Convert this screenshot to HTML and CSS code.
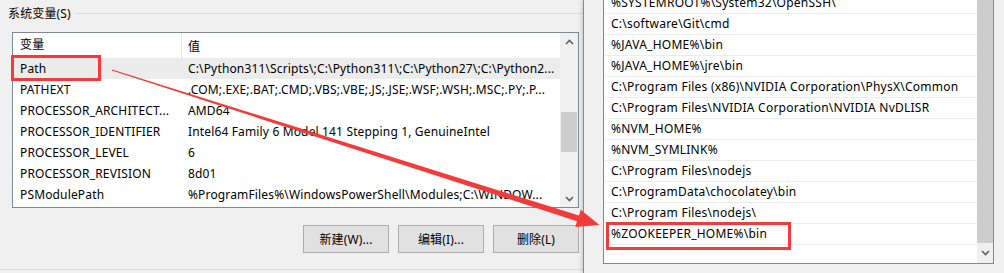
FILE: index.html
```html
<!DOCTYPE html>
<html lang="zh-CN">
<head>
<meta charset="utf-8">
<title>系统变量</title>
<link rel="stylesheet" href="styles.css">
</head>
<body>
<div class="screen">
  <section class="sys">
    <div class="group-head"><span class="group-label">系统变量(S)</span><span class="group-rule"></span></div>
    <div class="listview">
      <div class="lv-body">
        <div class="lv-header"><div class="c1">变量</div><div class="c2 hdr">值</div></div>
        <div class="lv-row selected"><div class="c1">Path</div><div class="c2">C:\Python311\Scripts\;C:\Python311\;C:\Python27\;C:\Python2...</div></div>
        <div class="lv-row"><div class="c1">PATHEXT</div><div class="c2">.COM;.EXE;.BAT;.CMD;.VBS;.VBE;.JS;.JSE;.WSF;.WSH;.MSC;.PY;.P...</div></div>
        <div class="lv-row"><div class="c1">PROCESSOR_ARCHITECT...</div><div class="c2">AMD64</div></div>
        <div class="lv-row"><div class="c1">PROCESSOR_IDENTIFIER</div><div class="c2">Intel64 Family 6 Model 141 Stepping 1, GenuineIntel</div></div>
        <div class="lv-row"><div class="c1">PROCESSOR_LEVEL</div><div class="c2">6</div></div>
        <div class="lv-row"><div class="c1">PROCESSOR_REVISION</div><div class="c2">8d01</div></div>
        <div class="lv-row"><div class="c1">PSModulePath</div><div class="c2">%ProgramFiles%\WindowsPowerShell\Modules;C:\WINDOW...</div></div>
      </div>
      <div class="vscroll">
        <div class="sb-arrow"><svg width="9" height="6" viewBox="0 0 9 6"><path d="M1 5 L4.5 1.5 L8 5" fill="none" stroke="#606060" stroke-width="1.6"/></svg></div>
        <div class="sb-track"><div class="sb-thumb"></div></div>
        <div class="sb-arrow"><svg width="9" height="6" viewBox="0 0 9 6"><path d="M1 1 L4.5 4.5 L8 1" fill="none" stroke="#606060" stroke-width="1.6"/></svg></div>
      </div>
    </div>
    <div class="buttons">
      <button class="btn">新建(W)...</button>
      <button class="btn">编辑(I)...</button>
      <button class="btn">删除(L)</button>
    </div>
    <div class="bottom-rule"></div>
  </section>
  <section class="edit">
    <div class="pathlist">
      <div class="prows">
        <div class="prow">%SYSTEMROOT%\System32\OpenSSH\</div>
        <div class="prow">C:\software\Git\cmd</div>
        <div class="prow">%JAVA_HOME%\bin</div>
        <div class="prow">%JAVA_HOME%\jre\bin</div>
        <div class="prow">C:\Program Files (x86)\NVIDIA Corporation\PhysX\Common</div>
        <div class="prow">C:\Program Files\NVIDIA Corporation\NVIDIA NvDLISR</div>
        <div class="prow">%NVM_HOME%</div>
        <div class="prow">%NVM_SYMLINK%</div>
        <div class="prow">C:\Program Files\nodejs</div>
        <div class="prow">C:\ProgramData\chocolatey\bin</div>
        <div class="prow">C:\Program Files\nodejs\</div>
        <div class="prow">%ZOOKEEPER_HOME%\bin</div>
      </div>
      <div class="pscroll">
        <div class="p-thumb"></div>
        <div class="sb-arrow down"><svg width="9" height="6" viewBox="0 0 9 6"><path d="M1 1 L4.5 4.5 L8 1" fill="none" stroke="#606060" stroke-width="1.6"/></svg></div>
      </div>
    </div>
  </section>
  <svg class="annot" width="1004" height="273" viewBox="0 0 1004 273">
    <rect x="12.5" y="56.5" width="87" height="23" fill="none" stroke="#f23c3c" stroke-width="3"/>
    <rect x="607.5" y="223.5" width="182" height="25" fill="none" stroke="#f23c3c" stroke-width="3"/>
    <path d="M112.2 69.4 L579 215.6 L580.7 209.7 L599.5 225 L575.3 226.9 L577 221.2 L111.8 70.6 Z" fill="#f23c3c"/>
  </svg>
</div>
</body>
</html>
```

FILE: styles.css
```css
* { box-sizing: border-box; }
html, body { margin: 0; padding: 0; }
body {
  background: #f0f0f0;
  font-family: "Noto Sans", "Noto Sans CJK SC", sans-serif;
  font-size: 12px;
  letter-spacing: 0.15px;
  color: #000;
}
.screen {
  position: relative;
  width: 1004px;
  height: 273px;
  display: flex;
  overflow: hidden;
}
.sys {
  width: 583px;
  display: flex;
  flex-direction: column;
}
.group-head {
  height: 27px;
  display: flex;
  align-items: center;
  padding-left: 8px;
}
.group-label { white-space: nowrap; line-height: 16px; }
.group-rule {
  flex: 1;
  height: 1px;
  background: #dcdcdc;
  margin-left: 5px;
  margin-top: -1px;
}
.listview {
  margin-top: 5px;
  margin-left: 12px;
  width: 567px;
  height: 176px;
  border: 1px solid #828790;
  background: #fff;
  display: flex;
}
.lv-body { width: 547px; overflow: hidden; }
.lv-header, .lv-row {
  display: flex;
  white-space: nowrap;
}
.lv-header { height: 25px; align-items: center; }
.lv-row { height: 21px; align-items: center; }
.lv-row.selected { background: #ececec; }
.c1 { width: 169px; padding-left: 7px; overflow: hidden; }
.c2 { flex: 1; padding-left: 6px; overflow: hidden; }
.lv-header .c1 { height: 25px; line-height: 24px; border-right: 1px solid #e5e5e5; }
.vscroll {
  width: 18px;
  background: #f0f0f0;
  display: flex;
  flex-direction: column;
}
.sb-arrow {
  height: 17px;
  display: flex;
  align-items: center;
  justify-content: center;
}
.sb-track { flex: 1; padding: 62px 1px 0 1px; }
.sb-thumb { height: 40px; background: #cdcdcd; }
.buttons {
  display: flex;
  gap: 9px;
  margin-top: 17px;
  padding-left: 303px;
}
.btn {
  width: 86px;
  height: 28px;
  background: #e1e1e1;
  border: 1px solid #adadad;
  font-family: "Noto Sans", "Noto Sans CJK SC", sans-serif;
  font-size: 12px;
  letter-spacing: 0.15px;
  color: #000;
  padding: 0;
}
.bottom-rule {
  margin-top: 16px;
  height: 1px;
  background: #dadada;
}
.edit {
  flex: 1;
  border-left: 1px solid #8a8a8a;
  box-shadow: -2px 0 3px rgba(0,0,0,0.12);
  padding-left: 19px;
  padding-right: 10px;
  background: #f0f0f0;
}
.pathlist {
  height: 264px;
  background: #fff;
  border: 1px solid #828790;
  border-top: none;
  display: flex;
  overflow: hidden;
}
.prows { flex: 1; padding-left: 1px; margin-top: -7px; }
.prow {
  height: 21px;
  line-height: 20px;
  border-bottom: 1px solid #ececec;
  padding-left: 6px;
  white-space: nowrap;
  letter-spacing: 0.25px;
}
.pscroll {
  width: 16px;
  background: #f0f0f0;
  display: flex;
  flex-direction: column;
}
.p-thumb { height: 243px; background: #cdcdcd; }
.sb-arrow.down { flex: 1; }
.annot {
  position: absolute;
  left: 0;
  top: 0;
  pointer-events: none;
}
```
